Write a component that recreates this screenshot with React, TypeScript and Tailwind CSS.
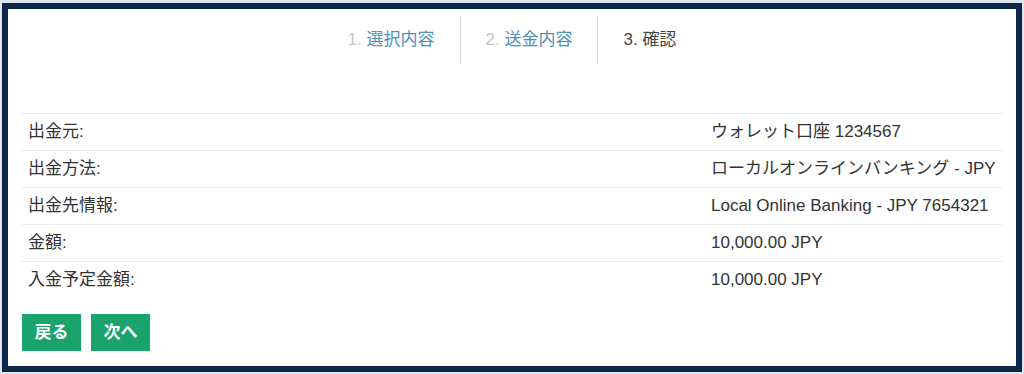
const font = { fontFamily: '"Liberation Sans", "Noto Sans CJK JP", sans-serif' };

const steps = [
  { num: '1.', label: '選択内容', done: true },
  { num: '2.', label: '送金内容', done: true },
  { num: '3.', label: '確認', done: false },
];

const rows = [
  { label: '出金元:', value: 'ウォレット口座 1234567' },
  { label: '出金方法:', value: 'ローカルオンラインバンキング - JPY' },
  { label: '出金先情報:', value: 'Local Online Banking - JPY 7654321' },
  { label: '金額:', value: '10,000.00 JPY' },
  { label: '入金予定金額:', value: '10,000.00 JPY' },
];

export default function App() {
  return (
    <div
      className="w-[1024px] h-[374px] bg-[#dfe6ee] pt-[3px] pl-[2px] pr-[2px] pb-[2px]"
      style={font}
    >
      <div className="h-full w-[1020px] border-[6px] border-[#0c2649] bg-white flex flex-col text-[17px] text-[#333]">
        {/* Steps */}
        <div className="flex justify-center pt-[7px]">
          {steps.map((s, i) => (
            <div
              key={s.num}
              className={
                'h-[48px] flex items-center px-[25px] ' +
                (i < steps.length - 1 ? 'border-r border-[#dcdcdc]' : '')
              }
            >
              {s.done ? (
                <>
                  <span className="text-[#c4c4c4]">{s.num}&nbsp;</span>
                  <span className="text-[#4f8fbf]">{s.label}</span>
                </>
              ) : (
                <span className="text-[#444]">
                  {s.num}&nbsp;{s.label}
                </span>
              )}
            </div>
          ))}
        </div>

        {/* Summary table */}
        <div className="mt-[49px] mx-[14px]">
          {rows.map((r) => (
            <div
              key={r.label}
              className="h-[37px] border-t border-[#ececec] grid grid-cols-[683px_1fr] items-center"
            >
              <div className="px-[6px]">{r.label}</div>
              <div className="px-[6px] whitespace-nowrap">{r.value}</div>
            </div>
          ))}
        </div>

        {/* Actions */}
        <div className="flex gap-[10px] mt-[16px] ml-[14px]">
          <button className="h-[37px] w-[59px] bg-[#1aa36d] text-white font-bold text-[17px]">
            戻る
          </button>
          <button className="h-[37px] w-[59px] bg-[#1aa36d] text-white font-bold text-[17px]">
            次へ
          </button>
        </div>
      </div>
    </div>
  );
}
